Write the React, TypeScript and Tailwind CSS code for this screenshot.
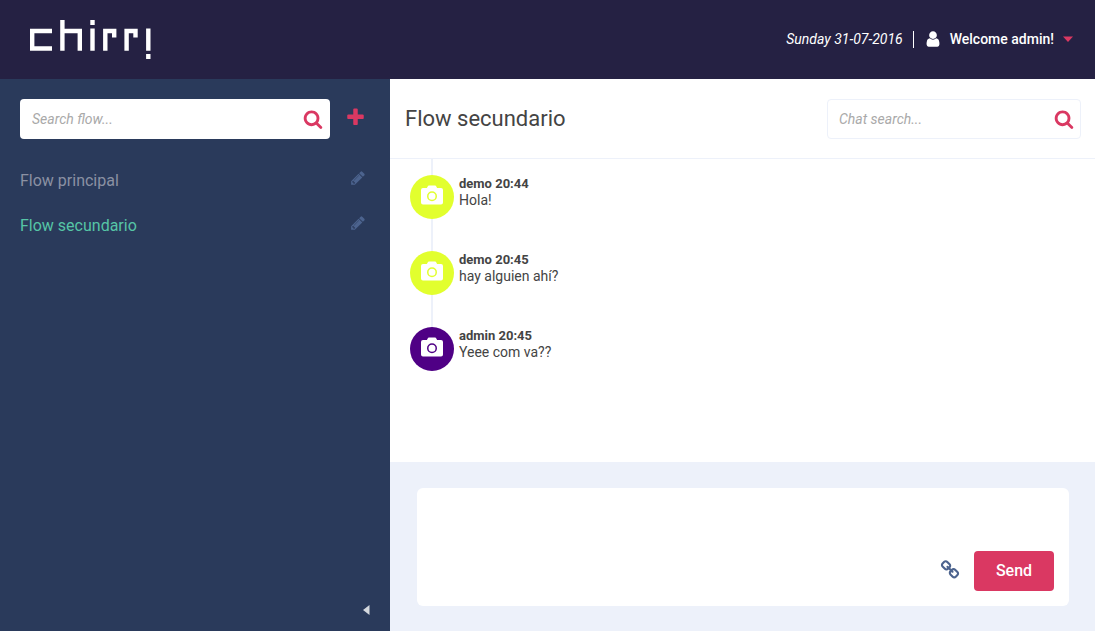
import { useState } from 'react'
import type { ReactNode } from 'react'

const SEARCH =
  'M1216 832q0-185-131.5-316.5t-316.5-131.5-316.5 131.5-131.5 316.5 131.5 316.5 316.5 131.5 316.5-131.5 131.5-316.5zm512 832q0 52-38 90t-90 38q-54 0-90-38l-343-342q-179 124-399 124-143 0-273.5-55.5t-225-150-150-225-55.5-273.5 55.5-273.5 150-225 225-150 273.5-55.5 273.5 55.5 225 150 150 225 55.5 273.5q0 220-124 399l343 343q37 37 37 90z'
const PLUS =
  'M1600 736v192q0 40-28 68t-68 28h-416v416q0 40-28 68t-68 28h-192q-40 0-68-28t-28-68v-416h-416q-40 0-68-28t-28-68v-192q0-40 28-68t68-28h416v-416q0-40 28-68t68-28h192q40 0 68 28t28 68v416h416q40 0 68 28t28 68z'
const PENCIL =
  'M491 1536l91-91-235-235-91 91v107h128v128h107zm523-928q0-22-22-22-10 0-17 7l-542 542q-7 7-7 17 0 22 22 22 10 0 17-7l542-542q7-7 7-17zm-54-192l416 416-832 832h-416v-416zm683 96q0 53-37 90l-166 166-416-416 166-165q36-38 90-38 53 0 91 38l235 234q37 39 37 91z'
const USER =
  'M1536 1399q0 109-62.5 187t-150.5 78h-854q-88 0-150.5-78t-62.5-187q0-85 8.5-160.5t31.5-152 58.5-131 94-89 134.5-34.5q131 128 313 128t313-128q76 0 134.5 34.5t94 89 58.5 131 31.5 152 8.5 160.5zm-256-887q0 159-112.5 271.5t-271.5 112.5-271.5-112.5-112.5-271.5 112.5-271.5 271.5-112.5 271.5 112.5 112.5 271.5z'
const LINK =
  'M1520 1216q0-40-28-68l-208-208q-28-28-68-28-42 0-72 32 3 3 19 18.5t21.5 21.5 15 19 13 25.5 3.5 27.5q0 40-28 68t-68 28q-15 0-27.5-3.5t-25.5-13-19-15-21.5-21.5-18.5-19q-33 31-33 73 0 40 28 68l206 207q27 27 68 27 40 0 68-26l147-146q28-28 28-67zm-703-705q0-40-28-68l-206-207q-28-28-68-28-39 0-68 27l-147 146q-28 28-28 67 0 40 28 68l208 208q27 27 68 27 42 0 72-31-3-3-19-18.5t-21.5-21.5-15-19-13-25.5-3.5-27.5q0-40 28-68t68-28q15 0 27.5 3.5t25.5 13 19 15 21.5 21.5 18.5 19q33-31 33-73zm895 705q0 120-85 203l-147 146q-83 83-203 83-121 0-204-85l-206-207q-83-83-83-203 0-123 88-209l-88-88q-86 88-208 88-120 0-204-84l-208-208q-84-84-84-204t85-203l147-146q83-83 203-83 121 0 204 85l206 207q83 83 83 203 0 123-88 209l88 88q86-88 208-88 120 0 204 84l208 208q84 84 84 204z'

function Icon({ d, className }: { d: string; className: string }) {
  return (
    <svg viewBox="0 0 1792 1792" fill="currentColor" aria-hidden="true" className={className}>
      <path d={d} />
    </svg>
  )
}

function Logo() {
  return (
    <svg viewBox="0 0 122 40" fill="none" stroke="#fff" strokeWidth="4.4" role="img" aria-label="chirr!" className="h-10 w-[122px]">
      <path d="M22 11H2.2V28.5H22" />
      <path d="M32.4 0V30.7M32.4 11H49.8V30.7" />
      <path d="M62.5 0V5M62.5 8.6V30.7" />
      <path d="M75.3 30.7V11H84.2V17.5" />
      <path d="M96.6 30.7V11H105.5V17.5" />
      <path d="M118.3 8.6V30.7M118.3 34V39" />
    </svg>
  )
}

function Camera() {
  return (
    <svg viewBox="0 0 22 20" aria-hidden="true" className="h-5 w-[22px]">
      <path
        fill="#fff"
        fillRule="evenodd"
        d="M8 .5h6a1.4 1.4 0 0 1 1.3.9l.8 1.600H20a2 2 0 0 1 2 2v12.500a2 2 0 0 1-2 2H2a2 2 0 0 1-2-2v-12.500a2 2 0 0 1 2-2h3.900l.8-1.600A1.400 1.400 0 0 1 8 .5zM11 6.200a5 5 0 1 0 0 10a5 5 0 0 0 0-10zm0 1.500a3.500 3.500 0 1 1 0 7a3.500 3.500 0 0 1 0-7z"
      />
    </svg>
  )
}

function SearchBox({ label, children, className }: { label: string; children?: ReactNode; className: string }) {
  return (
    <form onSubmit={(e) => e.preventDefault()} className={`flex h-10 items-center rounded bg-white ${className}`}>
      <input
        type="text"
        aria-label={label}
        placeholder={label}
        className="h-full min-w-0 flex-1 bg-transparent text-sm text-[#444] italic outline-none placeholder:text-[#a9a9a9]"
      />
      {children}
      <button type="submit" aria-label={`Submit: ${label}`} className="text-[#da3862]">
        <Icon d={SEARCH} className="size-5" />
      </button>
    </form>
  )
}

const flows = ['Flow principal', 'Flow secundario']

const messages = [
  { user: 'demo', time: '20:44', text: 'Hola!', color: 'bg-[#e2ff2e]' },
  { user: 'demo', time: '20:45', text: 'hay alguien ahí?', color: 'bg-[#e2ff2e]' },
  { user: 'admin', time: '20:45', text: 'Yeee com va??', color: 'bg-[#4f0085]' },
]

export default function App() {
  const [current, setCurrent] = useState('Flow secundario')

  return (
    <div className="flex min-h-screen flex-col bg-white font-[Roboto,sans-serif] text-[#444]">
      <header className="flex justify-between bg-[#252143] pt-5 pr-[22px] pb-[19px] pl-[30px] text-white">
        <a href="#">
          <Logo />
        </a>
        <div className="flex h-[38px] items-center text-sm">
          <time dateTime="2016-07-31" className="italic">
            Sunday 31-07-2016
          </time>
          <span className="ml-2.5 h-[17px] w-px bg-white" />
          <button type="button" className="flex items-center pl-2.5 font-medium">
            <Icon d={USER} className="size-[18px]" />
            <span className="ml-2">Welcome admin!</span>
            <svg viewBox="0 0 10 6" aria-hidden="true" className="ml-[9px] h-1.5 w-2.5 fill-[#da3862]">
              <path d="M0 .5h10L5 6z" />
            </svg>
          </button>
        </div>
      </header>

      <div className="flex flex-1">
        <aside className="flex w-[390px] shrink-0 flex-col bg-[#2a3a5b] px-5 pt-5 pb-4">
          <div className="flex items-center">
            <SearchBox label="Search flow..." className="flex-1 pr-[7px] pl-3" />
            <button type="button" aria-label="Add flow" className="mr-1 ml-[15px] pb-1 text-[#da3862]">
              <Icon d={PLUS} className="size-[21px]" />
            </button>
          </div>
          <ul className="mt-[19px]">
            {flows.map((flow) => (
              <li key={flow} className="flex h-[45px] items-center justify-between pr-1">
                <button
                  type="button"
                  onClick={() => setCurrent(flow)}
                  className={flow === current ? 'text-[#56c5a6]' : 'text-[#8b91a3]'}
                >
                  {flow}
                </button>
                <button type="button" aria-label={`Edit ${flow}`} className="pb-1.5 text-[#4c638e]">
                  <Icon d={PENCIL} className="size-4" />
                </button>
              </li>
            ))}
          </ul>
          <button type="button" aria-label="Collapse sidebar" className="mt-auto self-end">
            <svg viewBox="0 0 7 10" aria-hidden="true" className="h-2.5 w-[7px] fill-[#d4d8de]">
              <path d="M6.500 0v10L0 5z" />
            </svg>
          </button>
        </aside>

        <main className="flex min-w-0 flex-1 flex-col">
          <div className="flex h-20 items-center justify-between border-b border-[#edf1fa] pr-3.5 pl-[15px]">
            <h1 className="text-[22px]">{current}</h1>
            <SearchBox label="Chat search..." className="w-[254px] border border-[#edf1fa] pr-1.5 pl-[11px]" />
          </div>

          <ol className="flex flex-1 flex-col px-5">
            {messages.map((m, i) => (
              <li key={i} className="flex gap-[5px]">
                <div className="flex w-11 flex-col items-center">
                  <span className={i === 0 ? 'h-4 w-0.5 bg-[#edf1fa]' : 'h-8 w-0.5 bg-[#edf1fa]'} />
                  <span className={`flex size-11 items-center justify-center rounded-full pb-1 ${m.color}`}>
                    <Camera />
                  </span>
                </div>
                <div className={i === 0 ? 'pt-4' : 'pt-8'}>
                  <p className="text-[13px] leading-[17px] font-bold">
                    {m.user} {m.time}
                  </p>
                  <p className="text-sm leading-[17px]">{m.text}</p>
                </div>
              </li>
            ))}
          </ol>

          <form
            onSubmit={(e) => e.preventDefault()}
            className="bg-[#edf1fa] px-[26px] pt-[26px] pb-[25px] pl-[27px]"
          >
            <div className="flex items-end rounded-md bg-white pr-[15px] pb-[15px]">
              <textarea aria-label="Message" className="h-[103px] flex-1 resize-none p-3 text-sm outline-none" />
              <button type="button" aria-label="Attach link" className="mr-3.5 mb-[11px] text-[#4c638e]">
                <Icon d={LINK} className="size-5" />
              </button>
              <button type="submit" className="h-10 w-20 rounded bg-[#da3862] font-medium text-white">
                Send
              </button>
            </div>
          </form>
        </main>
      </div>
    </div>
  )
}
